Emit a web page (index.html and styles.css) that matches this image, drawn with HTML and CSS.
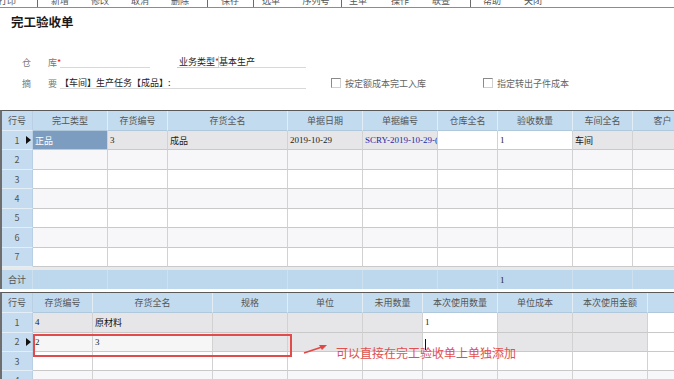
FILE: index.html
```html
<!DOCTYPE html>
<html lang="zh">
<head>
<meta charset="utf-8">
<link rel="stylesheet" href="styles.css">
</head>
<body>
<div class="page">
  <div class="toolbar">
    <span class="tb w40 m-13">打印</span><span class="sep m10"></span>
    <span class="tb w40 m2">新增</span><span class="tb w40">修改</span><span class="tb w40">取消</span><span class="tb w40">删除</span><span class="sep m7"></span>
    <span class="tb w40 m2">保存</span><span class="sep m3"></span>
    <span class="tb w34">选单</span><span class="tb w48 m4">序列号</span><span class="sep m1"></span>
    <span class="tb w32">生单</span><span class="tb w40 m6">操作</span><span class="tb w40 m1">联查</span><span class="sep m9"></span>
    <span class="tb w40 m1">帮助</span><span class="tb w40 m1">关闭</span>
  </div>

  <h1 class="title">完工验收单</h1>

  <div class="frow first">
    <span class="lbl a">仓</span><span class="lbl b">库<i class="req">*</i></span>
    <span class="field f1"></span>
    <span class="lbl c">业务类型<i class="req">*</i></span>
    <span class="field f2">基本生产</span>
  </div>
  <div class="frow second">
    <span class="lbl a">摘</span><span class="lbl b">要</span>
    <span class="field f3">【车间】生产任务【成品】:</span>
    <span class="chk c1"></span><span class="clbl">按定额成本完工入库</span>
    <span class="chk c2"></span><span class="clbl">指定转出子件成本</span>
  </div>

  <div class="grid g1">
    <div class="r hd">
      <div class="c rn">行号</div><div class="c">完工类型</div><div class="c">存货编号</div><div class="c">存货全名</div><div class="c">单据日期</div><div class="c">单据编号</div><div class="c">仓库全名</div><div class="c">验收数量</div><div class="c">车间全名</div><div class="c">客户</div>
    </div>
    <div class="r odd">
      <div class="c rn">1<span class="ind"></span></div><div class="c sel">正品</div><div class="c gr num">3</div><div class="c gr">成品</div><div class="c gr num">2019-10-29</div><div class="c gr num blue">SCRY-2019-10-29-(</div><div class="c wh"></div><div class="c wh num">1</div><div class="c gr dark">车间</div><div class="c gr"></div>
    </div>
    <div class="r even"><div class="c rn">2</div><div class="c"></div><div class="c"></div><div class="c"></div><div class="c"></div><div class="c"></div><div class="c"></div><div class="c"></div><div class="c"></div><div class="c"></div></div>
    <div class="r odd"><div class="c rn">3</div><div class="c"></div><div class="c"></div><div class="c"></div><div class="c"></div><div class="c"></div><div class="c"></div><div class="c"></div><div class="c"></div><div class="c"></div></div>
    <div class="r even"><div class="c rn">4</div><div class="c"></div><div class="c"></div><div class="c"></div><div class="c"></div><div class="c"></div><div class="c"></div><div class="c"></div><div class="c"></div><div class="c"></div></div>
    <div class="r odd"><div class="c rn">5</div><div class="c"></div><div class="c"></div><div class="c"></div><div class="c"></div><div class="c"></div><div class="c"></div><div class="c"></div><div class="c"></div><div class="c"></div></div>
    <div class="r even"><div class="c rn">6</div><div class="c"></div><div class="c"></div><div class="c"></div><div class="c"></div><div class="c"></div><div class="c"></div><div class="c"></div><div class="c"></div><div class="c"></div></div>
    <div class="r odd"><div class="c rn">7</div><div class="c"></div><div class="c"></div><div class="c"></div><div class="c"></div><div class="c"></div><div class="c"></div><div class="c"></div><div class="c"></div><div class="c"></div></div>
    <div class="gap"></div>
    <div class="r sum">
      <div class="c rn">合计</div><div class="c"></div><div class="c"></div><div class="c"></div><div class="c"></div><div class="c"></div><div class="c"></div><div class="c num">1</div><div class="c"></div><div class="c"></div>
    </div>
  </div>

  <div class="grid g2">
    <div class="r hd">
      <div class="c rn">行号</div><div class="c">存货编号</div><div class="c">存货全名</div><div class="c">规格</div><div class="c">单位</div><div class="c">未用数量</div><div class="c">本次使用数量</div><div class="c">单位成本</div><div class="c">本次使用金额</div><div class="c"></div>
    </div>
    <div class="r odd">
      <div class="c rn">1</div><div class="c gr num">4</div><div class="c gr dark">原材料</div><div class="c gr"></div><div class="c gr"></div><div class="c gr"></div><div class="c wh num">1</div><div class="c gr"></div><div class="c gr"></div><div class="c wh"></div>
    </div>
    <div class="r even">
      <div class="c rn">2<span class="ind"></span></div><div class="c lt num">2</div><div class="c lt num">3</div><div class="c gr"></div><div class="c gr"></div><div class="c gr"></div><div class="c wh"><span class="caret"></span></div><div class="c gr"></div><div class="c gr"></div><div class="c wh"></div>
    </div>
    <div class="r odd"><div class="c rn">3</div><div class="c"></div><div class="c"></div><div class="c"></div><div class="c"></div><div class="c"></div><div class="c"></div><div class="c"></div><div class="c"></div><div class="c"></div></div>
    <div class="r even"><div class="c rn">4</div><div class="c"></div><div class="c"></div><div class="c"></div><div class="c"></div><div class="c"></div><div class="c"></div><div class="c"></div><div class="c"></div><div class="c"></div></div>
  </div>

  <div class="redbox"></div>
  <svg class="arrow" width="26" height="12" viewBox="0 0 26 12">
    <line x1="1" y1="10" x2="19" y2="4" stroke="#e04848" stroke-width="1.5"/>
    <polygon points="24,2 16,2 19,7" fill="#e04848"/>
  </svg>
  <div class="note">可以直接在完工验收单上单独添加</div>
</div>
</body>
</html>
```

FILE: styles.css
```css
* { box-sizing: border-box; }
html, body { margin: 0; padding: 0; background: #fff; }
body {
  width: 674px;
  height: 379px;
  overflow: hidden;
  font-family: "Noto Sans CJK SC", "Noto Sans", sans-serif;
  font-size: 9px;
  color: #222;
}
.page { position: relative; width: 674px; height: 379px; overflow: hidden; }

/* toolbar */
.toolbar {
  display: flex;
  height: 8px;
  border-bottom: 1px solid #8c8c8c;
  overflow: hidden;
  color: #555;
}
.tb { display: block; text-align: center; line-height: 9px; margin-top: -4px; flex: none; white-space: nowrap; }
.sep { display: block; width: 1px; height: 7px; background: #6b6b6b; flex: none; }
.w32 { width: 32px; } .w34 { width: 34px; } .w40 { width: 40px; } .w48 { width: 48px; }
.m-13 { margin-left: -13px; } .m1 { margin-left: 1px; } .m2 { margin-left: 2px; }
.m3 { margin-left: 3px; } .m4 { margin-left: 4px; } .m6 { margin-left: 6px; }
.m7 { margin-left: 7px; } .m9 { margin-left: 9px; } .m10 { margin-left: 10px; }

/* title */
.title {
  margin: 6px 0 0 11px;
  font-size: 12.5px;
  line-height: 16px;
  font-weight: 700;
  color: #1a1a1a;
}

/* form */
.frow { display: flex; align-items: flex-end; height: 12px; padding-left: 22px; white-space: nowrap; }
.frow.first { margin-top: 26px; }
.frow.second { margin-top: 9px; }
.lbl { color: #777; line-height: 11px; flex: none; white-space: nowrap; }
.lbl.a { width: 26px; }
.lbl.b { width: 12px; }
.lbl.c { width: 42px; margin-left: 27px; }
.req { color: #e02020; font-style: normal; }
.field { height: 12px; line-height: 11px; border-bottom: 1px solid #d8d8d8; flex: none; color: #222; white-space: nowrap; }
.f1 { width: 90px; }
.f2 { width: 87px; }
.f3 { width: 246px; }
.chk {
  width: 10px; height: 10px; flex: none;
  border: 1px solid #8a8a8a;
  border-right-color: #d0d0d0; border-bottom-color: #d0d0d0;
  background: #fff;
  margin-bottom: 1px;
}
.c1 { margin-left: 25px; }
.c2 { margin-left: 56px; }
.clbl { color: #666; line-height: 11px; margin-left: 4px; width: 82px; flex: none; white-space: nowrap; }

/* grids */
.grid { border-left: 2px solid #6e6e6e; overflow: hidden; }
.g1 { margin-top: 21px; border-top: 1px solid #5a5a5a; }
.g2 { margin-top: 3px; border-top: 1px solid #5a5a5a; }
.r { display: grid; height: 19.45px; }
.g1 .r { grid-template-columns: 31px 75px 60px 120px 75px 75px 60px 75px 60px 60px; }
.g2 .r { grid-template-columns: 31px 60px 120px 75px 75px 60px 75px 75px 75px 60px; }
.r.hd { height: 20px; background: #c3dbef; }
.c {
  border-right: 1px solid #d2d2d2;
  border-bottom: 1px solid #c9c9c9;
  padding-left: 2px;
  display: flex;
  align-items: center;
  white-space: nowrap;
  overflow: hidden;
  color: #222;
  position: relative;
}
.hd .c {
  justify-content: center;
  padding-left: 0;
  color: #555;
  border-right-color: #e3edf6;
  border-bottom-color: #b0c8dc;
}
.c.rn {
  background: #c5dcf0;
  justify-content: center;
  padding-left: 0;
  color: #555;
  border-right-color: #b9d0e4;
  border-bottom-color: #e4eef7;
}
.even .c { background: #f7f6f8; }
.odd .c { background: #fff; }
.even .c.rn, .odd .c.rn { background: #c5dcf0; }
.c.gr, .even .c.gr, .odd .c.gr { background: #e6e6e8; }
.c.wh, .even .c.wh { background: #fff; }
.c.lt, .even .c.lt { background: #f6f6f6; }
.c.sel, .odd .c.sel { background: #7d9dc0; color: #fff; }
.num { font-family: "Liberation Serif", serif; font-size: 9px; }
.blue { color: #2626a6; }
.dark { color: #111; }
.ind {
  position: absolute;
  right: 1px;
  top: 50%;
  margin-top: -4px;
  width: 0; height: 0;
  border-left: 5px solid #111;
  border-top: 4px solid transparent;
  border-bottom: 4px solid transparent;
}
.caret { display: block; width: 1px; height: 11px; background: #111; margin-top: 6px; }
.gap { height: 3px; background: #e9e9e9; }
.r.sum { height: 19px; }
.sum .c { background: #bdd7ec; border-right-color: #cde0ef; border-bottom: none; }
.sum .c.rn { background: #bdd7ec; justify-content: flex-start; padding-left: 6px; }

/* annotation overlays */
.redbox {
  position: absolute;
  left: 33px; top: 334px;
  width: 259px; height: 23px;
  border: 2px solid #e24b4b;
}
.arrow { position: absolute; left: 303px; top: 343px; }
.note {
  position: absolute;
  left: 336px; top: 345px;
  font-size: 12px;
  line-height: 15px;
  color: #e0504f;
  white-space: nowrap;
}
```
